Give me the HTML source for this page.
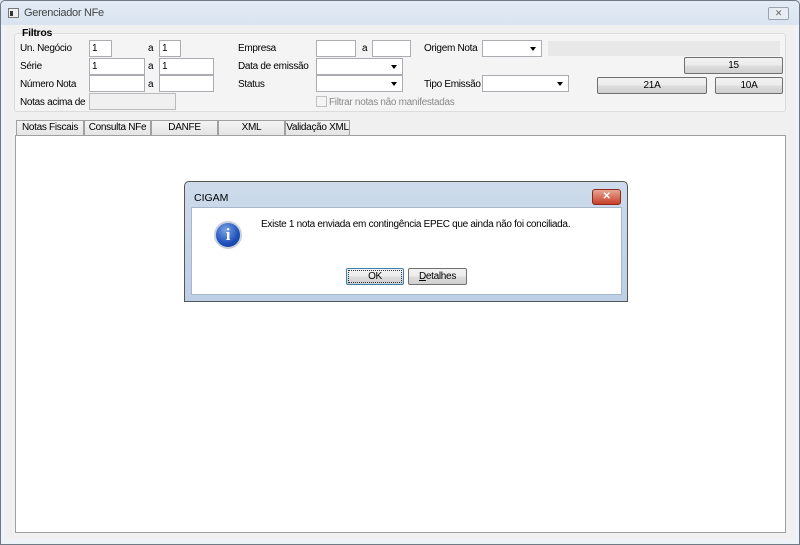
<!DOCTYPE html><html><head><style>
*{margin:0;padding:0;box-sizing:border-box}
body{width:800px;height:545px;overflow:hidden;background:#dfe7f1;font-family:"Liberation Sans",sans-serif;font-size:10px;letter-spacing:-0.3px;color:#000;position:relative}
.a{position:absolute}
.t{position:absolute;white-space:nowrap}
.in{position:absolute;background:#fff;border:1px solid #abadb3;height:17px;padding-left:2px;line-height:15px}
.cb:after{content:"";position:absolute;right:5px;top:6px;border-left:3.5px solid transparent;border-right:3.5px solid transparent;border-top:4px solid #000}
.btn{position:absolute;border:1px solid #707070;border-radius:2px;background:linear-gradient(#f2f2f2,#ebebeb 50%,#dddddd 51%,#cfcfcf);text-align:center;line-height:15px;height:17px}
.tab{position:absolute;top:120px;height:16px;border:1px solid #a0a0a0;border-bottom:none;background:linear-gradient(#f4f4f4,#e3e3e3);text-align:center;line-height:14px}
</style></head><body>
<div class="a" style="left:0;top:0;width:800px;height:545px;border:1px solid #6f7a86;border-radius:5px 5px 0 0;background:linear-gradient(#e3ebf5,#d9e4f0 24px,#eef3f9 24px)"></div>
<div class="a" style="left:8px;top:8px;width:11px;height:10px;border:1px solid #777;background:#eee"><div class="a" style="left:1px;top:2px;width:3px;height:5px;background:#333"></div></div>
<div class="t" style="left:24px;top:7px;color:#444;font-size:11px">Gerenciador NFe</div>
<div class="a" style="left:768px;top:7px;width:21px;height:13px;border:1px solid #9aa4b1;border-radius:2px;background:#e8edf3;text-align:center;font-size:9px;line-height:11px;color:#666">✕</div>
<div class="a" style="left:6px;top:25px;width:788px;height:514px;background:#f0f0f0"></div>
<div class="a" style="left:14px;top:33px;width:772px;height:79px;border:1px solid #dcdcdc;border-radius:3px;background:#f4f4f4"></div>
<div class="t" style="left:22px;top:27px;font-weight:bold;font-size:10.5px">Filtros</div>
<div class="t" style="left:20px;top:43px">Un. Negócio</div>
<div class="t" style="left:20px;top:61px">Série</div>
<div class="t" style="left:20px;top:79px">Número Nota</div>
<div class="t" style="left:20px;top:97px">Notas acima de</div>
<div class="in" style="left:89px;top:40px;width:23px">1</div><div class="t" style="left:148px;top:43px">a</div><div class="in" style="left:159px;top:40px;width:22px">1</div>
<div class="in" style="left:89px;top:58px;width:56px">1</div><div class="t" style="left:148px;top:61px">a</div><div class="in" style="left:159px;top:58px;width:55px">1</div>
<div class="in" style="left:89px;top:75px;width:56px"></div><div class="t" style="left:148px;top:79px">a</div><div class="in" style="left:159px;top:75px;width:55px"></div>
<div class="in" style="left:89px;top:93px;width:87px;background:#f0f0f0;border-color:#bbb"></div>
<div class="t" style="left:238px;top:43px">Empresa</div>
<div class="t" style="left:238px;top:61px">Data de emissão</div>
<div class="t" style="left:238px;top:79px">Status</div>
<div class="in" style="left:316px;top:40px;width:40px"></div><div class="t" style="left:362px;top:43px">a</div><div class="in" style="left:372px;top:40px;width:39px"></div>
<div class="in cb" style="left:316px;top:58px;width:87px"></div>
<div class="in cb" style="left:316px;top:75px;width:87px"></div>
<div class="a" style="left:316px;top:96px;width:11px;height:11px;border:1px solid #c0c0c0;background:#f4f4f4"></div>
<div class="t" style="left:329px;top:97px;color:#8a8a8a">Filtrar notas não manifestadas</div>
<div class="t" style="left:424px;top:43px">Origem Nota</div>
<div class="in cb" style="left:482px;top:40px;width:60px"></div>
<div class="a" style="left:548px;top:41px;width:232px;height:15px;background:#e8e8e8"></div>
<div class="t" style="left:424px;top:79px">Tipo Emissão</div>
<div class="in cb" style="left:482px;top:75px;width:87px"></div>
<div class="btn" style="left:684px;top:57px;width:99px">15</div>
<div class="btn" style="left:597px;top:77px;width:110px">21A</div>
<div class="btn" style="left:715px;top:77px;width:68px">10A</div>
<div class="tab" style="left:16px;width:68px">Notas Fiscais</div>
<div class="tab" style="left:84px;width:67px">Consulta NFe</div>
<div class="tab" style="left:151px;width:67px">DANFE</div>
<div class="tab" style="left:218px;width:67px">XML</div>
<div class="tab" style="left:285px;width:65px">Validação XML</div>
<div class="a" style="left:15px;top:135px;width:771px;height:398px;background:#fff;border:1px solid #a0a0a0"></div>
<div class="a" style="left:184px;top:181px;width:444px;height:121px;border:1px solid #555;border-radius:5px 5px 0 0;background:linear-gradient(#cddbeb,#bccfe4)"></div>
<div class="t" style="left:194px;top:192px;font-size:10.5px;letter-spacing:0">CIGAM</div>
<div class="a" style="left:592px;top:189px;width:29px;height:16px;border:1px solid #8a2a1e;border-radius:3px;background:linear-gradient(#e9a593,#c7402a);color:#fff;text-align:center;font-weight:bold;font-size:10px;line-height:14px">✕</div>
<div class="a" style="left:191px;top:207px;width:431px;height:88px;background:#fff;border:1px solid #a8b8cc"></div>
<div class="a" style="left:214px;top:221px;width:28px;height:28px;border-radius:50%;background:radial-gradient(circle at 40% 30%,#7aa3e8,#1e4fb8 60%,#163b8c);border:2px solid #c8d0dc;color:#fff;font-weight:bold;font-family:'Liberation Serif',serif;font-size:17px;text-align:center;line-height:24px">i</div>
<div class="t" style="left:261px;top:219px">Existe 1 nota enviada em contingência EPEC que ainda não foi conciliada.</div>
<div class="btn" style="left:346px;top:268px;width:58px;border-color:#3c7fb1;outline:1px dotted #333;outline-offset:-3px">OK</div>
<div class="btn" style="left:408px;top:268px;width:59px"><u>D</u>etalhes</div>
</body></html>
